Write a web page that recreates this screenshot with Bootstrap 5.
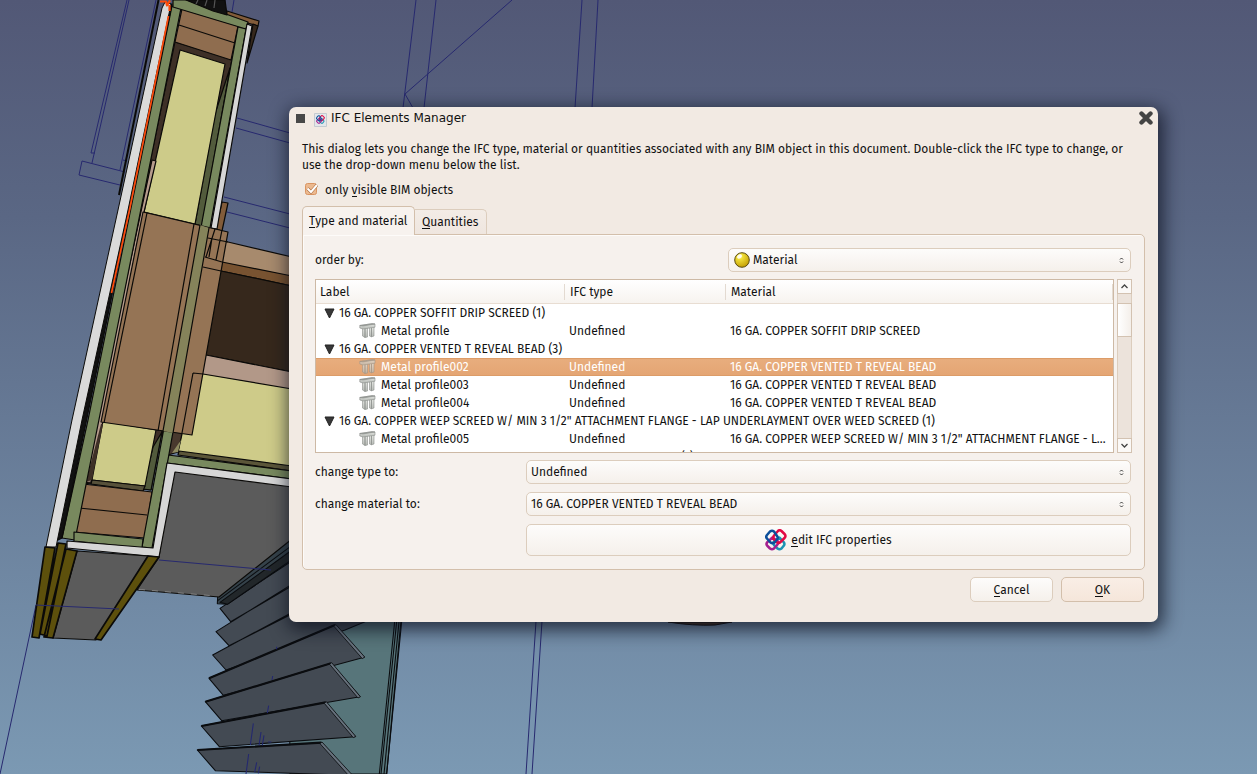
<!DOCTYPE html>
<html lang="en">
<head>
<meta charset="utf-8">
<title>IFC Elements Manager</title>
<link href="https://cdn.jsdelivr.net/npm/bootstrap@5.3.0/dist/css/bootstrap.min.css" rel="stylesheet">
<style>
body{width:1257px;height:774px;overflow:hidden;font:12px/16px "Fira Sans","Open Sans",sans-serif;color:#111;background:linear-gradient(#525876,#5a6784 28%,#7b99b3)}
.scene{left:0;top:0}
.ifc-window{left:289px;top:107px;width:869px;height:515px;background:#f2eae3;border-radius:7px;box-shadow:2px 5px 18px 3px rgba(10,14,28,.72)}
.titlebar{height:23px;padding:0 4px 0 7px;font:12px/23px "DejaVu Sans",sans-serif}
.win-sq{width:9px;height:9px;background:#484848}
.doc-icon{margin:1px 4px 0 9px}
.content-area{padding:11px 13px 0}
.check-row{height:17px;margin-top:8px}
.check-icon{margin:0 7px 0 3px}
u{text-decoration:none;box-shadow:inset 0 -1px #111;display:inline-block;height:15px;line-height:16px;vertical-align:top}
.tab-row{height:28px;position:relative;z-index:1;margin-top:8px}
.tab-on,.tab-off{border:1px solid #d3bfab;border-bottom:0;border-radius:5px 5px 0 0}
.tab-on{width:113px;height:29px;background:#f7f2ee;padding:6px 0 0 6px}
.tab-off{width:72px;height:25px;background:linear-gradient(#f3ece6,#efe6df);padding:4px 0 0 7px;border-left:0;border-top-left-radius:0;border-color:#dccdbd}
.pane{width:843px;height:336px;background:#f6f1ed;border:1px solid #d3bfab;border-radius:0 5px 5px 5px;padding:13px 13px 0 12px;box-shadow:inset 1px 1px #fdfbf9}
.combo,.push{border:1px solid #dccdbd;border-radius:5px;background:linear-gradient(#fdfcfb,#f5f0eb);color:#111}
.combo{height:24px;padding:0 6px 0 4px;width:605px}
.combo.order{width:403px;padding-left:5px}
.ball-icon{margin-right:3px}
.push{font-size:12px;line-height:16px;padding:0}
.push-wide{width:605px;height:32px}
.push-sm{width:83px;height:25px}
.push-ok{background:linear-gradient(#f9eee6,#f5e6da);border-color:#d3bfab}
.dialog-foot{margin:7px 1px 0 0}
.tree-wrap{margin:7px -1px 7px 0}
.tree{width:799px;height:174px;background:#fff;border:1px solid #cdb9a5;overflow:hidden;line-height:18px}
.tree-cols{grid-template-columns:249px 161px 1fr}
.tree-head{height:24px;background:linear-gradient(#fff,#f7f3ef);border-bottom:1px solid #e8ddd2;line-height:24px}
.tree-head>div{padding-left:5px;position:relative}
.tree-head>div:first-child{padding-left:4px}
.tree-head>div::after{content:"";position:absolute;right:0;top:4px;height:16px;border-right:1px solid #e3dad1}
.tree-row{height:18px;white-space:nowrap}
.tree-row>div{padding:0 6px 0 4px;overflow:hidden;text-overflow:ellipsis}
.tree-row>div:first-child{padding-left:43px;display:flex;align-items:center}
.tree-row svg{margin:-1px 3px 0 0}
.tree-group{height:18px;white-space:nowrap;padding-left:8px}
.picked{color:#fff;background:linear-gradient(#e8ae7e,#e4a573);box-shadow:inset 0 1px #dc9c68,inset 0 -1px #dc9c68}
.peek{padding-left:365px}
.scroll-track{width:15px;height:174px;background:#ece3db;border:1px solid #dccdbd}
.scroll-cap{width:15px;height:15px;margin:-1px 0 -1px -1px;background:#fbf9f7;border:1px solid #d3c2b1}
.scroll-thumb{width:15px;height:34px;margin:10px 0 0 -1px;background:linear-gradient(90deg,#fff,#f4efea);border:1px solid #d3c2b1}
svg{display:block;flex:none}
</style>
</head>
<body>
<svg class="scene position-absolute" width="1257" height="774" viewBox="0 0 1257 774">
<defs>
<linearGradient id="met" x2="0" y2="1"><stop stop-color="#e6e8e4"/><stop offset="1" stop-color="#b4b8b3"/></linearGradient>
<radialGradient id="ball" cx=".35" cy=".25" r=".8"><stop stop-color="#fffbd0"/><stop offset=".25" stop-color="#f1e03a"/><stop offset="1" stop-color="#c19b00"/></radialGradient>
<symbol id="profile" viewBox="0 0 17 17"><g stroke="#8b8f8b" stroke-width=".6" fill="url(#met)"><path d="M3.500 6v8l2.500 1.500V6M6 6v9.500l2.500-.5V6M10.500 5.500v8.500l2 .8V5.500M12.500 5.500v9.300l2.500-.8V5"/><path d="M.8 3.500 13 1.700l3 .3v3.200L4 7 .8 6z"/><path fill="#9da19e" d="M.8 3.500 13 1.700l3 .3L4 4z"/></g></symbol>
<symbol id="ifc" viewBox="0 0 22 22"><g fill="none" stroke-width="2.500" stroke-linejoin="round"><path stroke="#1c93b3" d="m14.500 8.500 4 4.500q2 2 0 4l-2 2.500q-2 1.500-4 0L9 16q-1.500-2 0-3.500z"/><path stroke="#a5208f" d="m7.500 8.500-5 4.500q-2 2 0 4l2.500 2.500q2 1.500 4 0l3.500-4q1.500-2 0-3.500z"/><path stroke="#e20a45" d="m13 2-4 4.500q-1.500 2 0 4l3 3q2 1 3.500-.5l4-4q2-2 0-4l-3-3q-2-1.500-3.500 0z"/><path stroke="#0d4f9b" d="M9 2.500q-2-1.500-4 0l-3 3.500q-1.500 2 0 3.500l3.500 4q2 1.500 4 0l2.500-3q1.500-2 0-3.500z"/></g></symbol>
<symbol id="tri" viewBox="0 0 10 11"><path d="M.5 1h9L5 10z" fill="#383838" stroke="#222" stroke-linejoin="round"/></symbol>
<symbol id="updown" viewBox="0 0 5 7"><path d="m1 2.500 1.500-1.500L4 2.500M1 4.500 2.500 6 4 4.500" fill="none" stroke="#333"/></symbol>
</defs>
<!-- construction lines -->
<g fill="none" stroke="#27296f">
<path d="M127 0 91 153h4M129 0 92 163M156 0 120 170M127 161l-4-1M82 161l43 11M82 161l-3 14 43 10.500M225 0l-3 20M234 0l-2 12M237 118l53 15M236 128l54 15M224 197l66 17M227 212l63 16"/>
<path d="M416 0 403 108M436 0l-12 108M512 0 405 94l8 14M582 0l-7 108M598 0l-6 108M536 621l-10 153M542 621l-10 153M36 605 0 774"/>
</g>
<!-- louvre and glazing -->
<g transform="translate(180 530) scale(.33333)" stroke="#0a0c0f" stroke-width="3.200" stroke-linejoin="round">
<path fill="#57757a" d="M327 250h338L620 732H330z"/>
<path d="M644 275 598 732M650 275 603 732M657 275 612 732M665 275l-45 457" fill="none"/>
<path fill="#434a53" d="m120 235 220-145v75L152 275zM108 305l232-145v90L147 347zM98 375l242-130 215 30-60 25-357 120z"/>
<path fill="#434a53" d="m87 445 378-160 88 97-423 114z"/><path fill="#434a53" d="m76 515 377-115 87 100-415 72z"/><path fill="#434a53" d="m64 588 373-71 89 103-408 30z"/><path fill="#434a53" d="m52 660 372-22 90 98-408-14z"/>
<g fill="none" stroke-width="6.500"><path d="m87 445 378-160M76 515l377-115M64 588l373-71M52 660l372-22"/></g>
<path fill="#66707b" d="m461 288 7-4 86 97-7 5zM449 403l6-5 86 102-7 4zM433 520l6-5 88 104-7 4zM420 641l6-5 92 100-9 4z" stroke-width="2.500"/>
<path fill="#35424a" d="M113 200 340 18v68L142 223l-30-2z"/><path fill="#22272a" d="M120 217 340 57v29L142 223z"/><path fill="none" d="M113 212 340 43"/>
<path d="m220 580-9 65M243 606l-6 40M252 616l-5 30M266 527l-4 22M278 438l-2 12M206 672l-8 60M230 697l-6 30M239 710l-4 20M264 636h10M290 350v8" stroke="#24286f"/>
</g>
<!-- building section -->
<g stroke="#0b0a08" stroke-width="1.200" stroke-linejoin="round">
<path fill="#5b5b5b" d="m172 468 120 15v56l-73 58-82-7 22-33z"/><path d="m139 589.500 76 6.500" stroke="#aaa" stroke-width=".6" stroke-dasharray="6 7" fill="none"/>
<path fill="#a78a6d" d="m207 237 21 5 64 15v20l-70-14-17-6z"/><path fill="#785331" d="m205 257 17 5 70 14v10l-71-15-16-4z"/>
<path fill="#36281c" d="m204 268 17 3 71 15v86l-86-17z"/><path fill="#b29888" d="m206 355 86 17v18l-99-17z"/>
<path fill="#cecb89" d="m193 373 10 1 89 15v78l-114-15z"/>
<path fill="#5b5639" d="m179 451 113 15v5l-114-16z"/><path fill="#78895e" d="m168 455 124 16v8l-125-16z"/>
<path fill="#49392e" d="m160 425 22 9-4 18-10 3z"/><path fill="#8f8b60" stroke="none" d="m181 440-3 12-6 1z"/>
<path fill="#825c3a" d="m222 202 6 1-6 28-6-2zM227 11l32 10-1 5-32-9z"/><path fill="#36281c" d="m253 24 5 2-11 37z"/>
<path fill="#3e3027" d="m175 42 57 17L151 490l-68-7z"/>
<path fill="#525b3c" d="m230 68-15 46-20 110 7 2zM162 432l-11 58-8-1 10-42z"/>
<path fill="#cdcb89" d="m180 50 45 14-30 160-51-12z"/><path fill="#b79c8d" d="m152 160 4 1-12 51-53 270-8 1z"/>
<path fill="#cdcb89" d="m103 421 53 9-11 56-53-6z"/><path fill="#3e3027" stroke="none" d="m101 424 2 0-11 56-6 2z"/><path fill="#57513a" d="m92 480 53 6-2 5-52-7z"/>
<path fill="#8f6d4f" d="m182 9 56 17-7 34-56-18zM83 484l69 8-7 46-71-6zM179 25l56 18M79 508l68 7"/>
<path fill="#78895e" d="m172 6 9 2-106 532-13-2 26-118z"/><path fill="#78895e" d="m173 0h14l61 22-2 7-73-22zM238 27l8 2-94 519-10-1z"/>
<path fill="#78895e" d="m74 532 69 7-1 9-68-7z"/>
<path fill="#111" d="m186 0h39l2 15-14-4z"/><path stroke="#555" d="m198 0-2 4M207 0l-2 6M215 0l-1 8"/>
<path fill="#d6d6d6" d="m247 24 5 2-35 203-6-1z"/>
<!-- translucent beam -->
<path fill="#957455" d="m143 212 85 20-36 203-91-13z"/><path fill="#85835a" stroke="none" d="m200 225 9 3-36 205-10-2z"/>
<path fill="none" d="m147 213-43 210M194 224l-36 207M200 225l-37 206M209 228l-36 205M208 238l20 4M205 257l17 5M203 267l18 4M193 373l-11 60M193 373l10 1M215 229l-9 28M212 238l-3 19M222 230l-6 30"/>
<!-- outer skin -->
<path fill="#111" d="m168 4 4 0-43 206-18 90-24 118-25 120-6 3 24-119z"/><path fill="#dadada" stroke-width="1" d="m162 8 3-6 6 2-43 206-46 210-26 127H46l26-127 46-210z"/>
<path d="M158.500 0 119 195" stroke-width="2"/><path stroke="#ff4b0b" stroke-width="1.700" fill="none" d="m168.500 16-39 194-18 83"/><path stroke="#ff4b0b" stroke-width="2.200" fill="none" d="M160 1.500h6l1 4 3-5M169.500 5v6"/>
<path fill="#d6d6d6" d="m167 463 125 16v8l-117-15-16 85-92-9v-7l86 7z"/>
<path fill="#5b5b5b" d="m77 551 71 5-52 84-43-2z"/>
<path fill="#5d500c" stroke-width="1.700" d="m45 547 10 1-16 90-7-1zM58 543l8 1-19 92-7-2zM66 549l11 2-24 87-9-1zM148 556l11 1-58 83-6-1z"/>
</g>
<g stroke="#27296f"><path d="m36 605 83 4M159 560l112 10"/></g>
<path d="M668 622q25 4 47 3l17-3z" fill="#4c382a" stroke="#14110f"/>
</svg>

<main class="ifc-window position-absolute">
<header class="titlebar d-flex align-items-center">
<div class="win-sq"></div>
<svg class="doc-icon" width="13" height="15" viewBox="0 0 13 15"><path d="M.5 1.500h12v13H.500z" fill="#e4e7ea" stroke="#c5cbd0"/><use href="#ifc" x="2" y="3" width="9" height="9"/><circle cx="6.500" cy="7.500" r="2" fill="#4b3b9a" opacity=".6"/></svg>
<span>IFC Elements Manager</span>
<svg class="ms-auto mb-1" width="16" height="16" viewBox="0 0 16 16"><path d="m3.500 4.500 9 9m0-9-9 9" stroke="#444" stroke-width="4.400" stroke-linecap="round"/></svg>
</header>
<div class="content-area">
<p class="mb-0">This dialog lets you change the IFC type, material or quantities associated with any BIM object in this document. Double-click the IFC type to change, or<br>use the drop-down menu below the list.</p>
<label class="check-row d-flex align-items-center"><svg class="check-icon" width="13" height="13" viewBox="0 0 13 13"><rect x=".5" y=".5" width="11" height="11" rx="2" fill="#ecb98f" stroke="#d99462"/><path d="m2.500 5.500 3.500 3.500 6-7" fill="none" stroke="#a96b3f" stroke-width="3.200"/><path d="m2.500 5.500 3.500 3.500 6-7" fill="none" stroke="#fff" stroke-width="2"/></svg><span>only <u>v</u>isible BIM objects</span></label>
<div class="tab-row d-flex align-items-end"><div class="tab-on align-self-start"><u>T</u>ype and material</div><div class="tab-off"><u>Q</u>uantities</div></div>
<section class="pane">
<div class="d-flex align-items-center justify-content-between"><span>order by:</span>
<div class="combo order d-flex align-items-center"><svg class="ball-icon" width="16" height="16" viewBox="0 0 16 16"><circle cx="8" cy="8" r="7.300" fill="url(#ball)" stroke="#5a4c10"/><ellipse cx="5.500" cy="4.500" rx="2.600" ry="1.800" fill="#fff" opacity=".85" transform="rotate(-35 5.500 4.500)"/></svg>Material<svg class="ms-auto" width="5" height="7"><use href="#updown"/></svg></div></div>
<div class="tree-wrap d-flex justify-content-between">
<div class="tree">
<div class="tree-head tree-cols d-grid"><div>Label</div><div>IFC type</div><div>Material</div></div>
<div class="tree-group d-flex align-items-center"><svg class="me-1" width="11" height="11"><use href="#tri"/></svg>16 GA. COPPER SOFFIT DRIP SCREED (1)</div>
<div class="tree-row tree-cols d-grid"><div><svg width="19" height="17"><use href="#profile" width="17"/></svg>Metal profile</div><div>Undefined</div><div>16 GA. COPPER SOFFIT DRIP SCREED</div></div>
<div class="tree-group d-flex align-items-center"><svg class="me-1" width="11" height="11"><use href="#tri"/></svg>16 GA. COPPER VENTED T REVEAL BEAD (3)</div>
<div class="tree-row tree-cols d-grid picked"><div><svg width="19" height="17" opacity=".7"><use href="#profile" width="17"/></svg>Metal profile002</div><div>Undefined</div><div>16 GA. COPPER VENTED T REVEAL BEAD</div></div>
<div class="tree-row tree-cols d-grid"><div><svg width="19" height="17"><use href="#profile" width="17"/></svg>Metal profile003</div><div>Undefined</div><div>16 GA. COPPER VENTED T REVEAL BEAD</div></div>
<div class="tree-row tree-cols d-grid"><div><svg width="19" height="17"><use href="#profile" width="17"/></svg>Metal profile004</div><div>Undefined</div><div>16 GA. COPPER VENTED T REVEAL BEAD</div></div>
<div class="tree-group d-flex align-items-center"><svg class="me-1" width="11" height="11"><use href="#tri"/></svg>16 GA. COPPER WEEP SCREED W/ MIN 3 1/2" ATTACHMENT FLANGE - LAP UNDERLAYMENT OVER WEED SCREED (1)</div>
<div class="tree-row tree-cols d-grid"><div><svg width="19" height="17"><use href="#profile" width="17"/></svg>Metal profile005</div><div>Undefined</div><div>16 GA. COPPER WEEP SCREED W/ MIN 3 1/2" ATTACHMENT FLANGE - L...</div></div>
<div class="peek">(1)</div>
</div>
<div class="scroll-track d-flex flex-column"><div class="scroll-cap"><svg width="13" height="13" viewBox="0 0 13 13"><path d="m3.500 8 3-3 3 3" fill="none" stroke="#444" stroke-width="1.300"/></svg></div><div class="scroll-thumb"></div><div class="scroll-cap mt-auto"><svg width="13" height="13" viewBox="0 0 13 13"><path d="m3.500 5 3 3 3-3" fill="none" stroke="#444" stroke-width="1.300"/></svg></div></div>
</div>
<div class="d-flex align-items-center justify-content-between mb-2"><span>change type to:</span><div class="combo d-flex align-items-center justify-content-between">Undefined<svg width="5" height="7"><use href="#updown"/></svg></div></div>
<div class="d-flex align-items-center justify-content-between mb-2"><span>change material to:</span><div class="combo d-flex align-items-center justify-content-between">16 GA. COPPER VENTED T REVEAL BEAD<svg width="5" height="7"><use href="#updown"/></svg></div></div>
<div class="d-flex justify-content-end"><button class="btn push push-wide d-flex align-items-center justify-content-center"><svg width="22" height="22" class="me-1"><use href="#ifc"/></svg><span><u>e</u>dit IFC properties</span></button></div>
</section>
<div class="dialog-foot d-flex justify-content-end gap-2"><button class="btn push push-sm"><u>C</u>ancel</button><button class="btn push push-sm push-ok"><u>O</u>K</button></div>
</div>
</main>
<script src="https://cdn.jsdelivr.net/npm/bootstrap@5.3.0/dist/js/bootstrap.bundle.min.js"></script>
</body>
</html>
